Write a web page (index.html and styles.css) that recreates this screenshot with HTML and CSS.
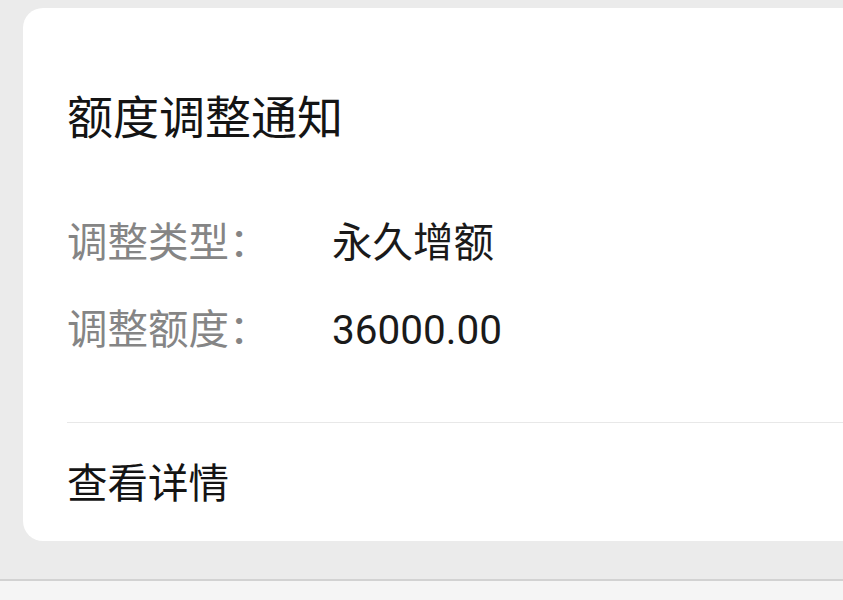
FILE: index.html
```html
<!DOCTYPE html>
<html lang="zh-CN">
<head>
  <meta charset="UTF-8" />
  <meta name="viewport" content="width=device-width, initial-scale=1.0"/>
  <title>额度调整通知</title>
  <link rel="stylesheet" href="styles.css">
</head>
<body>
  <div class="page">
    <div class="card">
      <h1 class="title">额度调整通知</h1>
      <div class="rows">
        <div class="row">
          <span class="label">调整类型：</span>
          <span class="value">永久增额</span>
        </div>
        <div class="row">
          <span class="label">调整额度：</span>
          <span class="value">36000.00</span>
        </div>
      </div>
      <div class="divider"></div>
      <a class="more" href="#">查看详情</a>
    </div>
  </div>
  <div class="bottom-bar"></div>
</body>
</html>
```

FILE: styles.css
```css
body {
  margin: 0;
  background: #ebebeb;
  font-family: Roboto, "Noto Sans CJK SC", sans-serif;
  color: #1a1a1a;
  overflow: hidden;
}

.page {
  padding: 8px 0 0 23px;
  height: 579px;
  box-sizing: border-box;
}

.card {
  background: #fff;
  border-radius: 20px 0 0 20px;
  height: 533px;
  box-sizing: border-box;
  padding: 80px 0 27px 44px;
}

.title {
  margin: 0;
  font-size: 46px;
  font-weight: normal;
  line-height: 60px;
  color: #141414;
}

.rows {
  margin-top: 65px;
  display: flex;
  flex-direction: column;
  gap: 27px;
}

.row {
  display: flex;
  line-height: 60px;
  font-size: 40.5px;
}

.label {
  width: 265px;
  color: #858585;
}

.value {
  color: #1a1a1a;
}

.divider {
  margin-top: 62px;
  height: 1px;
  background: #e8e8e8;
}

.more {
  display: block;
  margin-top: 31px;
  line-height: 60px;
  font-size: 40.5px;
  color: #141414;
  text-decoration: none;
}

.bottom-bar {
  height: 20px;
  border-top: 2px solid #d2d2d2;
  background: #f5f5f5;
}
```
